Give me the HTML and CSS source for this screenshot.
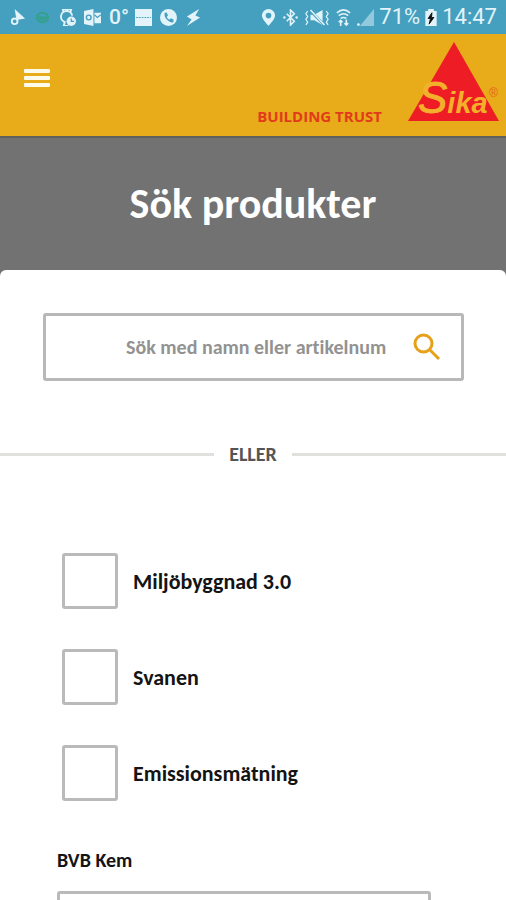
FILE: index.html
```html
<!DOCTYPE html>
<html lang="sv">
<head>
<meta charset="utf-8">
<meta name="viewport" content="width=device-width, initial-scale=1">
<title>Sök produkter</title>
<link rel="stylesheet" href="styles.css">
</head>
<body>
<div class="status">
  <div class="status-group notices">
    <svg class="icon" viewBox="0 0 18 18"><path d="M6 0 17 10 11 11 8 12Z"/><circle cx="6" cy="13" r="3" fill="none" stroke="currentColor" stroke-width="2"/></svg>
    <svg class="icon away" viewBox="0 0 18 18"><ellipse cx="9" cy="9" rx="6" ry="5"/><path d="M4 9h10M6 11h6"/></svg>
    <svg class="icon" viewBox="0 0 18 18"><path d="M5 4 4 0h9l-1 4M6 14l-1 4h5M14 7a6 6 0 1 0-7 7" fill="none" stroke="currentColor" stroke-width="2"/><circle cx="13" cy="13" r="5"/><path d="M13 10v3h3" fill="none" stroke="#459fbe" stroke-width="1.3"/></svg>
    <svg class="icon" viewBox="0 0 18 18"><path d="M0 2 10 0v18L0 16ZM11 4h7v11h-7Z"/><circle cx="5" cy="9" r="2.5" fill="none" stroke="#459fbe" stroke-width="1.5"/><path d="m11 6 3 3 4-3" fill="none" stroke="#459fbe" stroke-width="1.3"/></svg>
    <span class="temp">0°</span>
    <svg class="icon" viewBox="0 0 18 18"><path d="M0 0h18v18H0Z"/><path d="M1 9h16" stroke="#459fbe" stroke-width="1" stroke-dasharray="2 1"/></svg>
    <svg class="icon" viewBox="0 0 18 18"><circle cx="9" cy="9" r="9"/><path d="M5 4 7 3.600 8.500 7 7 8.500Q8 10.500 10 11.300L11.500 9.800 14.500 11.500 14 14Q11 15 7.500 11.500 4 8 5 4Z" fill="#459fbe"/></svg>
    <svg class="icon" viewBox="0 0 18 18"><path d="M15 0 2 8l5 3-5 7L16 9l-5-2Z"/></svg>
  </div>
  <div class="status-group system">
    <svg class="icon" viewBox="0 0 18 18"><path d="M9 0a7 7 0 0 0-7 7c0 4 7 11 7 11s7-7 7-11a7 7 0 0 0-7-7Zm0 4a3 3 0 1 1 0 6 3 3 0 0 1 0-6Z" fill-rule="evenodd"/></svg>
    <svg class="icon" viewBox="0 0 18 18"><path d="m5 5 8 8-4 4V1l4 4-8 8" fill="none" stroke="currentColor" stroke-width="1.700"/><circle cx="2.500" cy="9" r="1.300"/><circle cx="15.500" cy="9" r="1.300"/></svg>
    <svg class="icon mute" viewBox="0 0 28 18"><path d="M7 6h4l9-5v16l-9-5H7Z"/><path d="m6 1 16 16" stroke="#459fbe" stroke-width="3"/><path d="m7 1 15 16" stroke="currentColor" stroke-width="1.700"/><path d="M4 2 2 5l2 3-2 3 2 3-2 3M24 2l2 3-2 3 2 3-2 3 2 3" fill="none" stroke="currentColor" stroke-width="1.300"/></svg>
    <svg class="icon wifi" viewBox="0 0 18 18"><path d="M2 4q7-6 14 0M4 7q5-4 10 0M6 10q3-2 6 0" fill="none" stroke="currentColor" stroke-width="1.700"/><path d="M6 12v6M4 14l2-2 2 2M12 11v6M10 15l2 2 2-2" fill="none" stroke="currentColor" stroke-width="1.700"/></svg>
    <svg class="icon signal" viewBox="0 0 18 18"><path d="M18 0v18H3Z" opacity=".5"/><circle cx="1.500" cy="16.500" r="1.500"/></svg>
    <span>71%</span>
    <svg class="icon battery" viewBox="0 0 12 18"><path d="M3 0h6v2h3v16H0V2h3Z"/><path d="M7 4 3 10h2.500L4 16l5-7H6.500Z" fill="#111" stroke="#111"/></svg>
    <span>14:47</span>
  </div>
</div>
<header class="appbar">
  <button class="menu" type="button" aria-label="Meny"><span></span><span></span><span></span></button>
  <div class="brand">
    <span class="slogan">BUILDING TRUST</span>
    <svg class="logo" viewBox="0 0 92 80" role="img" aria-label="Sika">
      <path d="M46 0 91 79H0Z" fill="#ee1c25"/>
      <text class="wordmark" x="10" y="71"><tspan class="tall">S</tspan><tspan>ika</tspan></text>
      <text class="reg" x="81" y="55">®</text>
    </svg>
  </div>
</header>
<main>
  <div class="hero"><h1>Sök produkter</h1></div>
  <form class="card">
    <div class="search">
      <input type="text" aria-label="Sök med namn eller artikelnummer" placeholder="Sök med namn eller artikelnum">
      <button type="submit" aria-label="Sök"><svg viewBox="0 0 28 28"><circle cx="10.500" cy="10.500" r="8.500"/><path d="m17 17 9 9"/></svg></button>
    </div>
    <div class="divider"><span>ELLER</span></div>
    <div class="options">
      <label><input type="checkbox"><span>Miljöbyggnad 3.0</span></label>
      <label><input type="checkbox"><span>Svanen</span></label>
      <label><input type="checkbox"><span>Emissionsmätning</span></label>
    </div>
    <div class="field">
      <label for="bvb">BVB Kem</label>
      <select id="bvb"><option></option></select>
    </div>
  </form>
</main>
</body>
</html>
```
FILE: styles.css
```css
* {
  box-sizing: border-box;
}

html {
  scrollbar-width: none;
}

body {
  margin: 0;
  background: #fff;
  font-family: Carlito, Lato, "Open Sans", sans-serif;
  font-variant-ligatures: none;
  color: #141414;
}

button {
  padding: 0;
  border: 0;
  background: none;
}

.status {
  display: flex;
  justify-content: space-between;
  align-items: center;
  height: 34px;
  padding: 0 9px;
  background: #459fbe;
  color: #e2f3fa;
  font: 22px/34px Roboto, sans-serif;
}

.status-group {
  display: flex;
  align-items: center;
  gap: 8px;
}

.system {
  gap: 5px;
}

.icon {
  width: 17px;
  height: 17px;
  fill: currentColor;
}

.away {
  fill: none;
  stroke: #35a08c;
  stroke-width: 2;
}

.temp {
  width: 18px;
  font-size: 21px;
  font-weight: 500;
}

.mute {
  width: 26px;
}

.battery {
  width: 12px;
}

.appbar {
  display: flex;
  justify-content: space-between;
  height: 102px;
  padding: 8px 6px 8px 24px;
  background: #e8ab19;
}

.menu {
  display: grid;
  align-self: flex-start;
  gap: 3px;
  margin-top: 27px;
}

.menu span {
  width: 26px;
  height: 4px;
  border-radius: 1px;
  background: #fffbea;
}

.brand {
  display: flex;
  align-items: flex-end;
  gap: 26px;
}

.slogan {
  color: #e13b1c;
  font: 700 15px/24px "Open Sans", sans-serif;
}

.logo {
  align-self: flex-start;
  width: 92px;
  height: 80px;
  overflow: visible;
}

.wordmark {
  fill: #f3b02a;
  font: italic 700 29px "Liberation Sans", sans-serif;
}

.tall {
  font-size: 44px;
  font-weight: 400;
  stroke: #f3b02a;
}

.reg {
  fill: #e0641c;
  font: 12px "Liberation Sans", sans-serif;
}

.hero {
  padding: 40px 16px 46px;
  border-top: 2px solid #5f605c;
  background: #727272;
  text-align: center;
}

h1 {
  margin: 0;
  color: #fff;
  font-size: 42px;
  line-height: 52px;
}

.card {
  margin-top: -6px;
  padding-top: 43px;
  border-radius: 6px 6px 0 0;
  background: #fff;
}

.search {
  display: flex;
  align-items: center;
  height: 68px;
  margin: 0 42px 0 43px;
  padding-right: 20px;
  border: 3px solid #b8b8b8;
  border-radius: 3px;
}

.search input {
  flex: 1;
  min-width: 0;
  height: 100%;
  padding: 0 20px 0 80px;
  border: 0;
  outline: 0;
  background: none;
  font: 700 20px Carlito, Lato, sans-serif;
  font-variant-ligatures: none;
}

.search input::placeholder {
  color: #929292;
}

.search svg {
  display: block;
  width: 28px;
  height: 28px;
  fill: none;
  stroke: #e5a11a;
  stroke-width: 3;
}

.divider {
  display: flex;
  align-items: center;
  gap: 15px;
  margin-top: 60px;
  color: #555;
  font-size: 20px;
  font-weight: 700;
  line-height: 26px;
}

.divider::before,
.divider::after {
  content: "";
  flex: 1;
  height: 3px;
  background: #e0e0dd;
}

.options {
  display: grid;
  gap: 40px;
  padding: 86px 62px 0;
}

.options label {
  display: flex;
  align-items: center;
  gap: 15px;
  font-size: 22px;
  font-weight: 700;
}

.options input {
  appearance: none;
  width: 56px;
  height: 56px;
  margin: 0;
  border: 3px solid #bababa;
  border-radius: 3px;
}

.options input:checked {
  background: #e8ab19;
}

.field {
  display: grid;
  gap: 18px;
  padding: 46px 75px 40px 57px;
  font-size: 20px;
  font-weight: 700;
  line-height: 26px;
}

.field select {
  appearance: none;
  width: 100%;
  height: 60px;
  border: 3px solid #bababa;
  border-radius: 3px;
  background: #fff;
}
```
